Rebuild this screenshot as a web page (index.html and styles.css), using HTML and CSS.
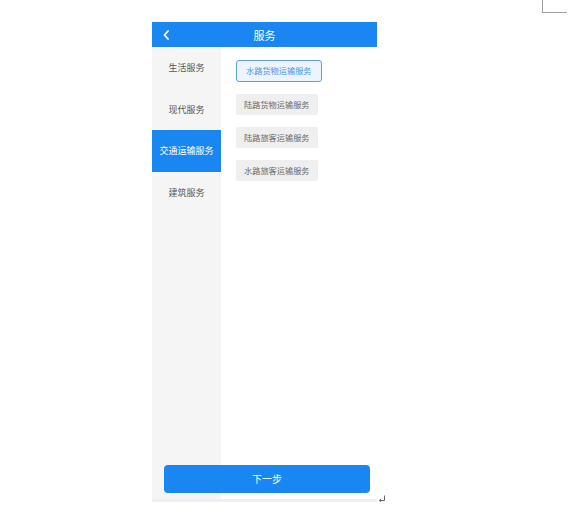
FILE: index.html
```html
<!DOCTYPE html>
<html lang="zh">
<head>
<meta charset="utf-8">
<title>服务</title>
<link rel="stylesheet" href="styles.css">
</head>
<body>
<div class="corner-mark"></div>
<div class="page">
  <div class="header">
    <span class="back">
      <svg width="6" height="10" viewBox="0 0 6 10"><path d="M5 1 L1.5 5 L5 9" fill="none" stroke="#fff" stroke-width="1.8" stroke-linecap="round" stroke-linejoin="round"/></svg>
    </span>
    <span class="title">服务</span>
    <span></span>
  </div>
  <div class="main">
    <div class="sidebar">
      <div class="cat">生活服务</div>
      <div class="cat">现代服务</div>
      <div class="cat active">交通运输服务</div>
      <div class="cat">建筑服务</div>
    </div>
    <div class="content">
      <div class="tag selected">水路货物运输服务</div>
      <div class="tag">陆路货物运输服务</div>
      <div class="tag">陆路旅客运输服务</div>
      <div class="tag">水路旅客运输服务</div>
    </div>
  </div>
  <div class="next-btn">下一步</div>
  <svg class="para-mark" width="8" height="8" viewBox="0 0 8 8"><path d="M6.5 0.5 V5.5 H1.5 M3.2 3.8 L1.3 5.5 L3.2 7.2" fill="none" stroke="#666" stroke-width="1"/></svg>
</div>
</body>
</html>
```
FILE: styles.css
```css
html, body {
  margin: 0;
  padding: 0;
  background: #fff;
  font-family: "Noto Sans CJK SC", "Noto Sans", sans-serif;
}
.corner-mark {
  position: absolute;
  left: 542px;
  top: 0;
  width: 24px;
  height: 12px;
  border-left: 1px solid #a0a0a0;
  border-bottom: 1px solid #a0a0a0;
}
.page {
  position: relative;
  margin: 22px 0 0 152px;
  width: 225px;
  height: 480px;
  display: flex;
  flex-direction: column;
}
.header {
  height: 25px;
  background: #1a86f2;
  display: grid;
  grid-template-columns: 40px 1fr 40px;
  align-items: center;
  color: #fff;
}
.back {
  display: flex;
  align-items: center;
  padding-left: 11px;
}
.title {
  text-align: center;
  font-size: 11px;
  line-height: 22px;
}
.main {
  flex: 1;
  display: flex;
  border-bottom: 3px solid #efefef;
}
.sidebar {
  width: 69px;
  background: #f5f5f5;
  display: flex;
  flex-direction: column;
}
.cat {
  height: 41.5px;
  display: flex;
  align-items: center;
  justify-content: center;
  font-size: 9px;
  color: #555;
}
.cat.active {
  background: #1a86f2;
  color: #fff;
}
.content {
  flex: 1;
  padding: 13px 0 0 15px;
  display: flex;
  flex-direction: column;
  align-items: flex-start;
  gap: 12px;
}
.tag {
  box-sizing: border-box;
  height: 21px;
  line-height: 21px;
  padding: 0 8px;
  font-size: 8.2px;
  color: #6a6a6a;
  background: #efefef;
  border-radius: 2px;
}
.tag.selected {
  line-height: 19px;
  padding: 0 9px;
  height: 22px;
  background: #ecf4fe;
  border: 1px solid #5a9ff0;
  color: #4a94e8;
  border-radius: 3px;
}
.next-btn {
  position: absolute;
  left: 12px;
  right: 7px;
  bottom: 9px;
  height: 28px;
  line-height: 28px;
  border-radius: 4px;
  background: #1a86f2;
  color: #fff;
  text-align: center;
  font-size: 10px;
}
.para-mark {
  position: absolute;
  left: 226px;
  top: 473px;
}
```
